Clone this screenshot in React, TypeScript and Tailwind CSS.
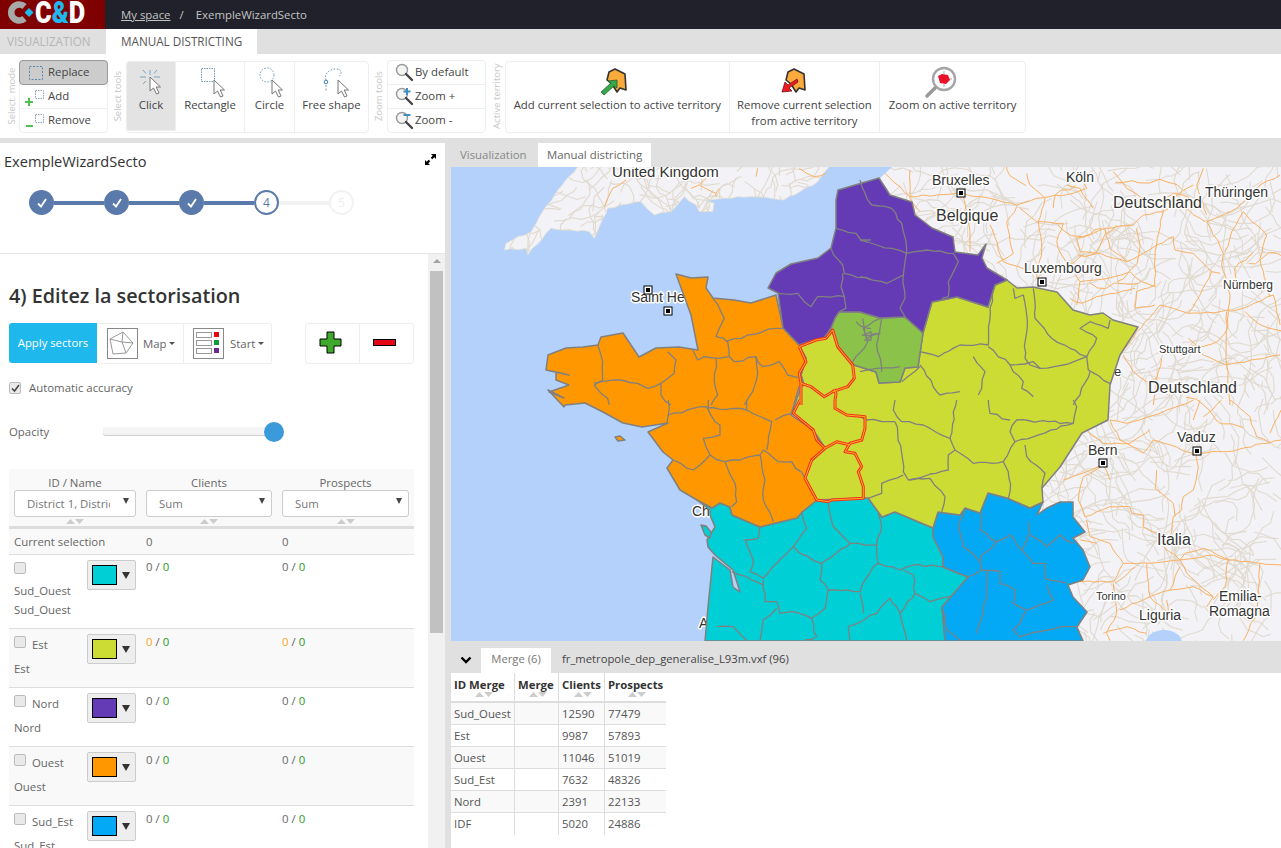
import React from "react";

const z = (ox: number, oy: number, s: string) =>
  s.trim().split(/\s+/).map((p) => {
    const [x, y] = p.split(",").map(Number);
    return `${(ox + x / 3).toFixed(1)},${(oy + y / 3).toFixed(1)}`;
  }).join(" ");

function mulberry(a: number) {
  return () => {
    a |= 0; a = (a + 0x6d2b79f5) | 0;
    let t = Math.imul(a ^ (a >>> 15), 1 | a);
    t = (t + Math.imul(t ^ (t >>> 7), 61 | t)) ^ t;
    return ((t ^ (t >>> 14)) >>> 0) / 4294967296;
  };
}
function wiggle(s: string, amp: number, seed: number) {
  const r = mulberry(seed);
  const pts = s.trim().split(/\s+/).map((p) => p.split(",").map(Number));
  const out: string[] = [];
  pts.forEach((p, i) => {
    out.push(`${p[0]},${p[1]}`);
    const q = pts[i + 1];
    if (!q) return;
    const d = Math.hypot(q[0] - p[0], q[1] - p[1]);
    const n = Math.floor(d / 6);
    for (let k = 1; k < n; k++) {
      const t = k / n;
      const x = p[0] + (q[0] - p[0]) * t + (r() - 0.5) * 2 * amp;
      const y = p[1] + (q[1] - p[1]) * t + (r() - 0.5) * 2 * amp;
      out.push(`${x.toFixed(1)},${y.toFixed(1)}`);
    }
  });
  return out.join(" ");
}

const NORD = "879,178 862,183 838,190 836,200 836,228 831,248 818,258 791,264 776,273 768,288 778,293 783,328 799,345 814,340 824,338 831,328 835,318 839,312 860,312 880,318 905,317 923,333 932,302 957,297 988,307 995,285 1007,280 987,268 982,258 986,244 978,255 955,252 953,237 932,228 915,215 912,202 890,195";
const OUEST = "676,274 691,278 708,277 706,288 713,298 734,300 751,303 776,295 783,328 799,345 806,358 801,375 804,385 799,387 791,415 813,430 825,448 812,460 805,478 817,500 802,512 797,518 780,522 760,527 732,515 730,507 720,503 712,508 697,500 680,490 667,468 673,460 663,452 648,432 668,423 642,427 623,423 603,412 585,403 565,405 564,407 548,390 564,398 549,392 569,385 556,380 556,372 569,375 546,370 548,355 566,348 583,347 598,345 601,337 623,333 639,357 656,348 679,347 698,350 691,315";
const EST = "995,285 1007,280 1017,288 1033,287 1057,292 1073,310 1090,315 1103,313 1113,320 1138,327 1120,355 1110,385 1108,420 1082,433 1060,467 1042,488 1043,502 1030,508 1007,498 988,493 980,513 965,508 960,515 938,512 933,528 895,512 882,517 868,498 863,498 817,500 805,478 812,460 825,448 813,430 792,413 801,387 804,385 801,375 806,358 799,345 814,340 824,338 831,328 838,348 854,365 876,372 879,383 900,382 905,368 918,367 923,333 932,302 957,297 988,307";
const IDF = "831,328 835,318 839,312 860,312 880,318 905,317 923,333 918,367 905,368 900,382 879,383 876,372 854,365 838,348";
const SE = "938,512 960,515 965,508 980,513 988,493 1007,498 1030,508 1043,502 1037,515 1047,508 1060,502 1073,502 1073,517 1085,532 1073,538 1083,550 1090,567 1083,580 1068,585 1073,597 1087,612 1077,627 1083,641 945,641 942,607 968,577 943,567 943,557 933,537 933,528";
const SO = "697,500 712,508 720,503 730,507 732,515 760,527 780,522 797,518 802,512 817,500 863,498 868,498 882,517 895,512 933,528 933,537 943,557 943,567 968,577 942,607 945,641 705,641 708,607 713,557 730,570 733,587 740,592 733,570 715,555 708,547 707,540 715,527 710,515 710,510";
const UK = wiggle(z(451, 165, "380,5 320,75 265,155 240,200 165,235 160,255 225,250 230,270 300,190 360,195 415,200 430,220 470,130 570,110 610,150 660,140 700,95 735,120 745,140 785,140 790,115 760,105 820,100 900,95 1000,105 1100,50 1135,5"), 1, 5);
const LAND = "892,167 1281,167 1281,641 1000,641 1000,400 880,178";

const ROADS_ORANGE: string[] = [
  ...[
    "150,15 150,100 180,140","290,85 150,95 75,25","310,95 330,200 330,260","310,85 470,120 530,100 640,85 680,70 660,20",
    "470,125 440,170 450,230 460,265 410,295","500,25 510,60 555,100 535,170 545,250 530,340","620,60 660,70 700,130","390,180 430,290 545,330",
    "480,130 530,170 610,175 590,230 605,270 660,350 745,340 810,320 845,350 885,365 885,280 890,240 910,130",
    "735,190 820,180 850,150 910,140 950,115 1035,170","735,190 750,250 800,290 850,265 890,240 940,215 945,255 1000,265 1055,320 1080,325",
    "650,220 700,205 735,190","650,220 660,260 720,265 800,290","1055,320 1020,390 985,445 900,420 880,445 830,500 780,570",
    "985,445 1080,440 1150,430 1240,390","885,420 825,430 830,380 885,360","1040,170 1090,265 1085,300 1110,390 1100,470",
    "1150,140 1115,200 1095,260","1150,140 1220,210 1200,280 1230,395","905,580 890,640 880,720","985,520 1030,570 1100,600 1260,570",
    "1100,440 1100,600 1110,720","760,20 800,70 890,130 1000,60","1240,390 1260,480","1030,10 1010,60 1040,150","1260,30 1200,60 1130,130 1040,170",
    "790,570 820,620 860,650 890,640","630,400 665,415 710,395 825,370","660,350 650,420",
  ].map((s) => z(860, 165, s)),
  ...[
    "750,60 800,70 900,40 1000,0","750,60 780,120 850,160 880,120 1000,160 1100,155 1263,120","680,90 730,130 810,130 870,90",
    "1005,150 1015,200 1000,270 970,290 965,330 940,350 930,410","890,210 885,265 940,310 945,350","730,195 670,230 655,300 675,350 750,320 810,320 815,340 850,345 850,380 895,400",
    "610,240 730,195 750,240","680,360 690,410 750,430 790,490 870,490 960,480 1060,465 1105,480 1200,490 1263,495","660,420 710,430","790,490 760,545 630,545",
    "760,550 770,640 740,700 750,722","860,490 870,590 925,640 920,600","960,480 910,440","960,480 975,460 1030,445 1110,480","960,480 980,520 1060,590 1040,620",
    "960,500 930,570 870,590 780,630","825,500 765,550","1105,480 1095,560 1060,600","1200,490 1190,640 1150,722","1020,0 1000,60","1085,0 1030,50",
    "1110,0 1170,50 1190,110 1230,130","730,700 800,680 860,700","1230,100 1263,30","1060,590 1000,560 930,570",
  ].map((s) => z(860, 400, s)),
  ...["525,45 485,70 470,100 460,125","765,40 745,60 720,70","745,60 795,85 805,70","1045,10 1090,35 1125,25","920,10 915,35","795,85 795,95"].map((s) => z(451, 165, s)),
].map((s, i) => wiggle(s, 0.9, 100 + i));

const BORDERS: string[] = [
  ...[
    "785,400 820,460 795,515 830,530 835,575 800,580 760,575 740,585 725,555","825,530 890,510 975,490 995,490","835,575 850,590 915,575 935,605 985,590 1010,630 1050,640",
    "795,580 790,650 800,690 780,720","915,575 920,625 905,680 880,720","440,540 455,590 455,645 430,660 470,700 475,720","430,655 510,645 560,655 590,670 630,655 670,625 675,585 650,560",
    "630,655 630,690 660,720","1155,190 1215,205 1230,225 1260,225","1140,250 1175,300 1180,325 1260,345","1175,325 1170,365 1180,395 1100,395 1080,425 1060,410 1040,385 980,385","1180,395 1185,430 1165,440",
    "1235,460 1240,490 1250,530 1230,560 1205,590","1215,470 1250,490 1260,490","1240,510 1260,500 1260,525 1240,525",
  ].map((s) => z(451, 165, s)),
  ...[
    "415,0 415,45 490,25 530,20 555,65 570,75 570,105 520,115 540,165 585,185 630,180 690,165 700,150 745,185 785,185 825,235","530,25 650,30 725,65 710,150","735,60 785,40","410,70 415,45",
    "585,185 615,250 620,305 605,320","690,165 705,240 700,300 725,350 730,365","540,165 510,195 490,210 430,180","535,0 535,25","650,0 650,30",
    "895,310 910,380 960,430 950,440 875,490 810,460 790,440 740,490 700,535 660,515 670,480 645,420 685,415 690,380","815,335 830,385 790,440","960,430 985,430 1040,435 1055,380 1045,340",
    "1040,435 1045,490 1110,510 1150,495 1240,500","875,490 870,540 895,570 990,575 1030,500 1045,490","1120,510 1150,525 1155,580 1110,640 1080,595 1040,640 955,680 960,720",
    "895,570 885,625 845,655 790,635 750,640 740,605 705,605 700,540","990,580 1000,640","1155,580 1200,605 1260,590","605,515 650,530 700,555","740,625 700,660 690,720","845,655 860,710 825,720","1110,640 1130,720","560,680 610,680 650,720",
  ].map((s) => z(530, 400, s)),
  ...[
    "0,45 35,120 95,130 125,175 140,260 130,330 135,400 120,430 135,455","0,225 50,240 95,250 140,265 200,255 280,265 295,290 265,350 265,395 245,400","0,335 80,355 130,330",
    "405,360 390,430 385,540 300,540 235,575 180,560","460,370 465,400 490,390 500,450 495,580 510,600 540,610 610,600 680,575","385,545 450,600 460,620 490,650 485,670 520,695",
    "520,370 525,460 575,520 630,550 680,575 710,520 660,490 690,470 745,490 750,465","680,575 685,615 750,655","450,600 520,590 540,610","340,575 375,620 365,670 355,690","690,620 660,690 640,720",
    "180,600 230,680 240,690 300,680","125,650 180,605","65,460 50,540 65,620","0,620 50,610 120,605","60,460 10,490 20,520 60,505 5,510",
  ].map((s) => z(860, 165, s)),
  ...[
    "105,65 125,160 130,215 145,240 210,235 255,290 245,335","125,65 190,75 270,115 285,150 265,165 265,210 150,240","285,150 340,190 430,185 445,215 450,275 445,295","430,185 465,125 450,95 470,60 640,70 650,20 640,0",
    "465,125 640,70","495,135 500,170 555,220 545,265","290,0 270,115","105,65 20,60 0,50","130,225 65,250 65,280 25,295","105,0 100,30 125,65","385,0 390,40 450,60",
    "315,325 295,380 310,440 360,485 365,510 420,515 420,550 465,570 460,610 500,630 580,600 560,555","365,340 360,390 410,425 450,405 485,450 520,490 555,490 555,535 620,550","505,365 510,405 560,440 600,405 640,430","505,405 485,450",
    "410,425 365,465 360,485","365,510 325,530","380,515 380,590 350,700","500,630 480,670 460,690 480,710 600,680 650,680","245,620 260,690 300,722",
  ].map((s) => z(860, 400, s)),
].map((s, i) => wiggle(s, 1.2, 300 + i));

const RED: string[] = [
  z(451, 165, "1045,545 1095,525 1125,520 1145,495 1160,545 1205,600 1210,640 1190,665 1145,680 1120,695 1080,665 1050,655 1045,625 1065,590 1045,545"),
  z(451, 165, "1050,655 1050,720"),
  z(530, 400, "810,0 790,40 850,90 860,120 885,145 845,180 825,235 860,300 895,305 905,300 1000,295 1000,260 985,215 995,200 975,160 945,155 960,130 995,120 1005,85 1005,50 950,45 915,25 915,0"),
  z(530, 400, "885,145 920,125 960,135"),
  "835,400 836,394 834,389",
];

function walks(seed: number, n: number, x0: number, y0: number, x1: number, y1: number, lo = 6, hi = 15) {
  const r = mulberry(seed);
  const out: string[] = [];
  for (let i = 0; i < n; i++) {
    let x = x0 + r() * (x1 - x0), y = y0 + r() * (y1 - y0), a = r() * 6.28;
    const pts = [`${x.toFixed(1)},${y.toFixed(1)}`];
    const k = 4 + Math.floor(r() * 5);
    for (let j = 0; j < k; j++) {
      a += (r() - 0.5) * 1.6;
      const l = lo + r() * (hi - lo);
      x += Math.cos(a) * l; y += Math.sin(a) * l;
      pts.push(`${x.toFixed(1)},${y.toFixed(1)}`);
    }
    out.push(pts.join(" "));
  }
  return out;
}
const BEIGE_MAIN = walks(7, 620, 880, 167, 1281, 641);
const BEIGE_UK = walks(11, 130, 505, 167, 830, 255, 5, 11);
const ORANGE_EXTRA = walks(23, 16, 1000, 170, 1281, 400, 6, 12);

const LABELS: [string, number, number, number][] = [
  ["Bruxelles", 932, 185, 14], ["Belgique", 936, 221, 16], ["Köln", 1066, 182, 14], ["Deutschland", 1113, 208, 16], ["Thüringen", 1205, 197, 14],
  ["Luxembourg", 1024, 273, 14], ["Nürnberg", 1223, 289, 12], ["Stuttgart", 1159, 353, 11], ["Deutschland", 1148, 393, 16], ["Vaduz", 1177, 442, 14],
  ["Bern", 1088, 455, 14], ["Italia", 1157, 545, 16], ["Torino", 1096, 600, 11], ["Liguria", 1139, 620, 14], ["Emilia-", 1219, 601, 14], ["Romagna", 1209, 616, 14],
  ["e", 1114, 376, 13], ["United Kingdom", 612, 177, 15], ["Saint Helier", 631, 302, 14], ["Cherbourg", 692, 516, 14], ["Arcachon", 699, 628, 14],
];
const PINS: [number, number][] = [[961, 193], [1042, 282], [1103, 463], [1197, 451], [668, 311], [648, 290]];

function MapView() {
  return (
    <svg viewBox="451 167 830 474" className="block w-[830px] h-[474px] shrink-0">
      <defs>
        <clipPath id="ukclip"><polygon points={UK} /></clipPath>
        <clipPath id="landclip"><polygon points={LAND} /></clipPath>
      </defs>
      <rect x="451" y="167" width="830" height="474" fill="#b3d1fa" />
      <polygon points={UK} fill="#f3f2f6" stroke="#e3ded6" strokeWidth="0.8" />
      <polygon points={LAND} fill="#f3f2f6" />
      <g fill="none" stroke="#e0dacf" strokeWidth="1.1" strokeLinejoin="round">
        <g clipPath="url(#ukclip)">{BEIGE_UK.map((p, i) => <polyline key={i} points={p} />)}</g>
        <g clipPath="url(#landclip)">{BEIGE_MAIN.map((p, i) => <polyline key={i} points={p} />)}</g>
      </g>
      <g fill="none" stroke="#fab163" strokeWidth="1" strokeLinejoin="round">
        {ROADS_ORANGE.map((p, i) => <polyline key={i} points={p} />)}
        <g clipPath="url(#landclip)">{ORANGE_EXTRA.map((p, i) => <polyline key={i} points={p} />)}</g>
      </g>
      <ellipse cx="1164" cy="643" rx="18" ry="13" fill="#b3d1fa" />
      <g fontFamily="'Liberation Sans', Arial, sans-serif" fill="#333" stroke="#fff" strokeWidth="3" strokeLinejoin="round" paintOrder="stroke">
        {LABELS.map(([t, x, y, s], i) => <text key={i} x={x} y={y} fontSize={s}>{t}</text>)}
      </g>
      {PINS.map(([x, y], i) => (
        <g key={i}>
          <rect x={x - 4} y={y - 4} width="8" height="8" fill="#fff" stroke="#000" strokeWidth="1" />
          <rect x={x - 2} y={y - 2} width="4" height="4" fill="#000" />
        </g>
      ))}
      <g stroke="#808080" strokeWidth="1.5" strokeLinejoin="round">
        <polygon points={SO} fill="#00cfd5" />
        <polygon points={SE} fill="#03a9f4" />
        <polygon points={EST} fill="#cddc35" />
        <polygon points={IDF} fill="#8bc34a" />
        <polygon points={OUEST} fill="#ff9800" />
        <polygon points={NORD} fill="#653ab5" />
        <polygon points="701,525 706,526 711,532 710,538 705,535" fill="#00cfd5" />
        <polygon points="615,437 620,436 625,440 618,441" fill="#ff9800" />
      </g>
      <g fill="none" stroke="#808080" strokeWidth="1.3" strokeLinejoin="round">
        {BORDERS.map((p, i) => <polyline key={i} points={p} />)}
      </g>
      <g fill="none" strokeLinejoin="round">
        {RED.map((p, i) => <polyline key={i} points={p} stroke="#f4311c" strokeWidth="3" />)}
        {RED.map((p, i) => <polyline key={i} points={p} stroke="#ffb020" strokeWidth="1" />)}
      </g>
    </svg>
  );
}

const Cursor = ({ x, y }: { x: number; y: number }) => (
  <path transform={`translate(${x} ${y})`} d="M0 0V14L3.5 11L6.5 17L9 16L6.2 10H10.5Z" fill="#fff" stroke="#777" strokeWidth="1" strokeLinejoin="round" />
);

const Mag = ({ plus, minus }: { plus?: boolean; minus?: boolean }) => (
  <svg width="20" height="20" viewBox="0 0 20 20" className="shrink-0">
    <circle cx="7" cy="7" r="5.5" fill="#f4f4f4" stroke="#999" strokeWidth="1.4" />
    <path d="M11 11L17 17" stroke="#444" strokeWidth="2.4" strokeLinecap="round" />
    {plus && <path d="M12 1V8M8.5 4.5H15.5" stroke="#3d8fc4" strokeWidth="2" />}
    {minus && <path d="M8.5 4H15.5" stroke="#3d8fc4" strokeWidth="2" />}
  </svg>
);

const VLabel = ({ t, cls }: { t: string; cls: string }) => (
  <div className={`${cls} shrink-0 flex items-center justify-center self-stretch`}>
    <span className="whitespace-nowrap -rotate-90 text-[9.5px] text-[#c8c8c8]">{t}</span>
  </div>
);

const ToolBtn = ({ w, active, label, children }: { w: string; active?: boolean; label: string; children: React.ReactNode }) => (
  <div className={`${w} h-full flex flex-col items-center border-r border-[#eeeeee] last:border-r-0 ${active ? "bg-[#e3e3e3] border border-[#b5b5b5] rounded-l-sm -ml-[1px] -my-[1px] h-[72px]" : ""}`}>
    <svg width="44" height="32" viewBox="0 0 44 32" className="mt-[5px] shrink-0">{children}</svg>
    <span className="-mt-[2px] text-[11.4px] leading-[16px] text-[#444] whitespace-nowrap">{label}</span>
  </div>
);

const ATBtn = ({ w, dx, lines, children }: { w: string; dx: string; lines: string[]; children: React.ReactNode }) => (
  <div className={`${w} h-full flex flex-col items-center border-r border-[#eeeeee] last:border-r-0`}>
    <svg width="40" height="30" viewBox="0 0 40 30" className={`mt-[6px] shrink-0 overflow-visible ${dx}`}>{children}</svg>
    <div className="-mt-[1px] text-[11.35px] leading-[15.5px] text-[#444] text-center whitespace-nowrap">
      {lines.map((l) => <div key={l}>{l}</div>)}
    </div>
  </div>
);

const Terr = () => <path d="M14 4L20 1L30 6L31 22L25 20L22 24L17 16L12 12Z" fill="#fbab3c" stroke="#333" strokeWidth="1.6" strokeLinejoin="round" />;

function Toolbar() {
  return (
    <div className="h-[84px] bg-white flex items-stretch text-[#444] pt-[6px] pb-[5px]">
      <VLabel t="Select. mode" cls="w-[19px] pl-[5px]" />
      <div className="w-[89px] shrink-0 border border-[#eeeeee] rounded-sm flex flex-col">
        <div className="h-[25px] -mx-[1px] -mt-[1px] bg-[#cccccc] border border-[#999] rounded-sm flex items-center text-[11.4px] shrink-0">
          <svg width="28" height="24" viewBox="0 0 28 24" className="shrink-0"><rect x="9.5" y="5.5" width="13" height="13" fill="none" stroke="#5a86ad" strokeDasharray="2 1.5" /></svg>
          <span className="-mt-[2px]">Replace</span>
        </div>
        <div className="h-[24px] border-b border-[#eeeeee] flex items-center text-[11.4px]">
          <svg width="28" height="24" viewBox="0 0 28 24" className="shrink-0"><rect x="15.5" y="5.5" width="8" height="8" fill="none" stroke="#8aa5bd" strokeDasharray="1.5 1" /><path d="M9 13V21M5 17H13" stroke="#4fbf4f" strokeWidth="2" /></svg>
          <span className="-mt-[2px]">Add</span>
        </div>
        <div className="h-[23px] flex items-center text-[11.4px]">
          <svg width="28" height="24" viewBox="0 0 28 24" className="shrink-0"><rect x="15.5" y="5.5" width="8" height="8" fill="none" stroke="#8aa5bd" strokeDasharray="1.5 1" /><path d="M6 17H13" stroke="#4fbf4f" strokeWidth="2" /></svg>
          <span className="-mt-[2px]">Remove</span>
        </div>
      </div>
      <VLabel t="Select tools" cls="w-[18px] pl-[2px]" />
      <div className="w-[243px] h-[72px] shrink-0 border border-[#eeeeee] rounded-sm flex mt-[1px]">
        <ToolBtn w="w-[50px]" active label="Click">
          <g stroke="#7da2bf" strokeWidth="1"><path d="M21 3V8M11 10H17M25 10H31M14 3L17 6.5M28 3L25 6.5M14 17L17 14M28 17L25 14" /></g>
          <Cursor x={21} y={10} />
        </ToolBtn>
        <ToolBtn w="w-[69px]" label="Rectangle">
          <rect x="13.5" y="1.5" width="13" height="13" fill="none" stroke="#6f98b9" strokeDasharray="1.5 1" />
          <Cursor x={26} y={13} />
        </ToolBtn>
        <ToolBtn w="w-[50px]" label="Circle">
          <circle cx="19" cy="8" r="7" fill="none" stroke="#6f98b9" strokeDasharray="1.5 1.5" />
          <Cursor x={24} y={13} />
        </ToolBtn>
        <ToolBtn w="w-[73px]" label="Free shape">
          <path d="M16 13C14 6 20 2 26 2C33 2 32 8 28 10" fill="none" stroke="#6f98b9" strokeDasharray="1.5 1.5" />
          <circle cx="16" cy="15" r="1.8" fill="none" stroke="#3d7fae" />
          <path d="M16 18V24" stroke="#6f98b9" strokeDasharray="2 1.5" />
          <Cursor x={28} y={13} />
        </ToolBtn>
      </div>
      <VLabel t="Zoom tools" cls="w-[18px] pl-[2px]" />
      <div className="w-[99px] shrink-0 border border-[#eeeeee] rounded-sm flex flex-col text-[11.4px]">
        <div className="h-[24px] border-b border-[#eeeeee] flex items-center pl-[7px]"><Mag /><span className="-mt-[2px]">By default</span></div>
        <div className="h-[24px] border-b border-[#eeeeee] flex items-center pl-[7px]"><Mag plus /><span className="-mt-[2px]">Zoom +</span></div>
        <div className="h-[23px] flex items-center pl-[7px]"><Mag minus /><span className="-mt-[2px]">Zoom -</span></div>
      </div>
      <VLabel t="Active territory" cls="w-[19px] pl-[3px]" />
      <div className="w-[521px] h-[72px] shrink-0 border border-[#eeeeee] rounded-sm flex mt-[1px]">
        <ATBtn w="w-[224px]" dx="-translate-x-[2px]" lines={["Add current selection to active territory"]}>
          <Terr />
          <path d="M6 24L9 27L19 18L22 20L22 12L13 13L16 15Z" fill="#36a94a" stroke="#2a5a30" strokeWidth="0.8" />
        </ATBtn>
        <ATBtn w="w-[151px]" dx="-translate-x-[10px]" lines={["Remove current selection", "from active territory"]}>
          <Terr />
          <path d="M24 14L23 11L14 17L11 14L8 24L18 23L15 20Z" fill="#ea1c24" stroke="#7a1010" strokeWidth="0.8" />
        </ATBtn>
        <ATBtn w="w-[145px]" dx="-translate-x-[14px]" lines={["Zoom on active territory"]}>
          <circle cx="25" cy="11" r="11" fill="#fff" stroke="#a5a5a5" strokeWidth="2.4" />
          <path d="M25 3V6M25 16V19M33 11H30" stroke="#aaa" strokeWidth="1" />
          <path d="M19 8L23 6L29 7L31 12L27 16L21 15Z" fill="#e8112a" />
          <path d="M16 20L8 28" stroke="#999" strokeWidth="3.5" strokeLinecap="round" />
        </ATBtn>
      </div>
    </div>
  );
}

const Step = ({ n, state }: { n: number; state: "done" | "cur" | "next" }) => (
  <div className={`w-[25px] h-[25px] rounded-full shrink-0 flex items-center justify-center text-[12px] ${state === "done" ? "bg-[#5a7aab] text-white" : state === "cur" ? "bg-white border-2 border-[#5a7aab] text-[#5a7aab]" : "bg-white border-2 border-[#f2f2f2] text-[#eeeeee]"}`}>
    {state === "done" ? (
      <svg width="12" height="12" viewBox="0 0 12 12"><path d="M2 6.5L5 9.5L10 2" fill="none" stroke="#fff" strokeWidth="1.8" /></svg>
    ) : n}
  </div>
);
const StepLine = ({ on }: { on: boolean }) => <div className={`w-[50px] h-[4px] shrink-0 ${on ? "bg-[#5a7aab]" : "bg-[#f2f2f2]"}`} />;

const Sort = () => (
  <svg width="18" height="5" viewBox="0 0 18 5" className="block mx-auto"><path d="M0 5L4.5 0L9 5ZM9 0H18L13.5 5Z" fill="#cccccc" /></svg>
);

const Sel = ({ text, w }: { text: string; w: string }) => (
  <div className={`${w} h-[27px] border border-[#cccccc] rounded-[3px] bg-white relative flex items-center pl-[12px] text-[11.4px] text-[#777] overflow-hidden`}>
    <span className="whitespace-nowrap overflow-hidden w-[83px]">{text}</span>
    <span className="absolute right-[6px] top-[7px] w-0 h-0 border-l-[3px] border-r-[3px] border-t-[6px] border-l-transparent border-r-transparent border-t-[#444]" />
  </div>
);

const Check = ({ on }: { on?: boolean }) => (
  <span className="w-[12px] h-[12px] shrink-0 rounded-[2px] bg-[#e9e9e9] border border-[#bbbbbb] flex items-center justify-center">
    {on && <svg width="9" height="9" viewBox="0 0 9 9"><path d="M1 4.5L3.5 7L8 1" fill="none" stroke="#444" strokeWidth="1.5" /></svg>}
  </span>
);

const Val = ({ warn }: { warn?: boolean }) => (
  <span className="text-[11.4px] text-[#666]"><span className={warn ? "text-[#f5a623]" : ""}>0</span> / <span className="text-[#2c9a1e]">0</span></span>
);

const Row = ({ name, color, alt, wrap, warn, h }: { name: string; color: string; alt?: boolean; wrap?: boolean; warn?: boolean; h: string }) => (
  <div className={`grid grid-cols-[132px_136px_137px] ${h} border-b border-[#dddddd] text-[11.4px] text-[#666] shrink-0 ${alt ? "bg-[#f9f9f9]" : "bg-white"}`}>
    <div className="flex pl-[5px] pt-[5px]">
      <div className="w-[73px] shrink-0 -mt-[5px]">
        {wrap ? (
          <>
            <div className="pt-[7px] h-[26px]"><Check /></div>
            <div className="leading-[19px]">{name}</div>
            <div className="leading-[19px]">{name}</div>
          </>
        ) : (
          <>
            <div className="flex items-start gap-[6px] h-[26px] pt-[7px]">
              <Check />
              <span className="leading-[19px] -mt-[1px]">{name}</span>
            </div>
            <div className="leading-[19px] mt-[4px]">{name}</div>
          </>
        )}
      </div>
      <div className="w-[49px] h-[30px] bg-[#eeeeee] border border-[#cccccc] rounded-[2px] flex items-center pl-[4px] gap-[5px] shrink-0">
        <span className="w-[25px] h-[20px] border border-black shrink-0" style={{ backgroundColor: color }} />
        <span className="w-0 h-0 border-l-[4px] border-r-[4px] border-t-[7px] border-l-transparent border-r-transparent border-t-[#333]" />
      </div>
    </div>
    <div className={`pl-[5px] ${wrap ? "pt-[4px]" : "pt-[5px]"} leading-[16px]`}><Val warn={warn} /></div>
    <div className={`pl-[5px] ${wrap ? "pt-[4px]" : "pt-[5px]"} leading-[16px]`}><Val warn={warn} /></div>
  </div>
);

function LeftPanel() {
  return (
    <div className="w-[445px] shrink-0 bg-white flex flex-col overflow-hidden">
      <div className="h-[111px] shrink-0 border-b border-[#e5e5e5] px-[4px] pt-[8px]">
        <div className="flex items-center justify-between pr-[4px]">
          <span className="text-[14.6px] leading-[20px] font-medium text-[#333]">ExempleWizardSecto</span>
          <svg width="13" height="13" viewBox="0 0 13 13" className="-translate-y-[2px]"><path d="M7 1H12V6L10.3 4.3L8.3 6.3L6.7 4.7L8.7 2.7ZM1 7L2.7 8.7L4.7 6.7L6.3 8.3L4.3 10.3L6 12H1Z" fill="#000" /></svg>
        </div>
        <div className="flex items-center pl-[25px] mt-[19px]">
          <Step n={1} state="done" /><StepLine on /><Step n={2} state="done" /><StepLine on /><Step n={3} state="done" /><StepLine on /><Step n={4} state="cur" /><StepLine on={false} /><Step n={5} state="next" />
        </div>
      </div>
      <div className="flex-1 flex overflow-hidden min-h-0">
        <div className="w-[428px] shrink-0 pl-[9px] overflow-hidden">
          <div className="w-[405px]">
            <h2 className="mt-[27px] text-[19.8px] leading-[30px] font-semibold text-[#333]">4) Editez la sectorisation</h2>
            <div className="flex mt-[12px] items-start">
              <div className="w-[88px] h-[40px] bg-[#1fb8ec] rounded-l-[3px] text-white text-[11.3px] flex items-center justify-center">Apply sectors</div>
              <div className="w-[87px] h-[41px] border border-l-0 border-[#eeeeee] flex items-center pl-[10px] gap-[5px] text-[11.4px] text-[#666]">
                <svg width="31" height="31" viewBox="0 0 31 31" className="shrink-0"><rect x="0.5" y="0.5" width="30" height="30" fill="#fff" stroke="#888" /><path d="M3 11L16 4L26 15L19 25L6 26ZM3 11L15 14L19 25M16 4L15 14L26 15" fill="none" stroke="#999" /></svg>
                <span>Map</span>
                <span className="-ml-[3px] w-0 h-0 border-l-[3px] border-r-[3px] border-t-[3px] border-l-transparent border-r-transparent border-t-[#555]" />
              </div>
              <div className="w-[88px] h-[41px] border border-l-0 border-[#eeeeee] rounded-r-[3px] flex items-center pl-[9px] gap-[6px] text-[11.4px] text-[#666]">
                <svg width="31" height="31" viewBox="0 0 31 31" className="shrink-0"><rect x="0.5" y="0.5" width="30" height="30" fill="#fff" stroke="#888" /><g fill="none" stroke="#999"><rect x="3.5" y="4.5" width="15" height="5" /><rect x="3.5" y="12.5" width="15" height="5" /><rect x="3.5" y="20.5" width="15" height="5" /></g><rect x="21" y="4" width="5" height="5" fill="#e30613" /><rect x="21" y="12" width="5" height="5" fill="#0f9a3c" /><rect x="21" y="20" width="5" height="5" fill="#6c2a8c" /></svg>
                <span>Start</span>
                <span className="-ml-[3px] w-0 h-0 border-l-[3px] border-r-[3px] border-t-[3px] border-l-transparent border-r-transparent border-t-[#555]" />
              </div>
              <div className="ml-[33px] w-[109px] h-[41px] border border-[#eeeeee] rounded-[3px] flex">
                <div className="w-[54px] border-r border-[#eeeeee] flex items-center justify-center">
                  <svg width="23" height="23" viewBox="0 0 23 23" className="-translate-x-[2px] -translate-y-[1px]"><path d="M8 1H15V8H22V15H15V22H8V15H1V8H8Z" fill="#3fa92e" stroke="#000" /></svg>
                </div>
                <div className="flex-1 flex items-center justify-center">
                  <svg width="23" height="7" viewBox="0 0 23 7" className="-translate-x-[2px] -translate-y-[1px]"><rect x="0.5" y="0.5" width="22" height="6" fill="#e30613" stroke="#000" /></svg>
                </div>
              </div>
            </div>
            <div className="flex items-center gap-[8px] mt-[17px] h-[14px] text-[11.4px] text-[#666]"><Check on /><span>Automatic accuracy</span></div>
            <div className="flex items-center h-[24px] mt-[24px]">
              <span className="w-[94px] text-[11.4px] text-[#666] mt-[1px]">Opacity</span>
              <div className="relative w-[168px] h-[9px] bg-[#f5f5f5] rounded-[3px] shadow-[inset_0_-1px_1px_#ccc]">
                <span className="absolute -right-[13px] -top-[5px] w-[20px] h-[20px] rounded-full bg-[#3b9ad9]" />
              </div>
            </div>
            <div className="mt-[26px] bg-[#f9f9f9] h-[60px] flex flex-col border-b-[3px] border-[#dddddd]">
              <div className="grid grid-cols-[132px_136px_137px]">
                {[["ID / Name", "District 1, District 2", "w-[122px]"], ["Clients", "Sum", "w-[126px]"], ["Prospects", "Sum", "w-[127px]"]].map(([t, s, w]) => (
                  <div key={t} className="pl-[5px]">
                    <div className={`${w} text-center text-[11.4px] leading-[13px] pt-[7px] pb-[1px] text-[#666]`}>{t}</div>
                    <Sel text={s} w={w} />
                    <div className={`${w} pt-[2px]`}><Sort /></div>
                  </div>
                ))}
              </div>
            </div>
            <div className="grid grid-cols-[132px_136px_137px] h-[26px] items-center border-b border-[#dddddd] bg-[#f9f9f9] text-[11.4px] text-[#666]">
              <div className="pl-[5px]">Current selection</div><div className="pl-[5px]">0</div><div className="pl-[5px]">0</div>
            </div>
            <Row name="Sud_Ouest" color="#00cfd5" wrap h="h-[74px]" />
            <Row name="Est" color="#cddc35" alt warn h="h-[59px]" />
            <Row name="Nord" color="#653ab5" h="h-[59px]" />
            <Row name="Ouest" color="#ff9800" alt h="h-[59px]" />
            <Row name="Sud_Est" color="#03a9f4" h="h-[59px]" />
          </div>
        </div>
        <div className="w-[17px] shrink-0 bg-[#f1f1f1] flex flex-col items-center">
          <span className="mt-[5px] w-0 h-0 border-l-[4px] border-r-[4px] border-b-[4px] border-l-transparent border-r-transparent border-b-[#a3a3a3]" />
          <div className="w-[13px] h-[362px] mt-[8px] bg-[#c1c1c1]" />
        </div>
      </div>
    </div>
  );
}

const MERGE: [string, string, string][] = [
  ["Sud_Ouest", "12590", "77479"], ["Est", "9987", "57893"], ["Ouest", "11046", "51019"], ["Sud_Est", "7632", "48326"], ["Nord", "2391", "22133"], ["IDF", "5020", "24886"],
];

function MergeTable() {
  const cols = "grid grid-cols-[64px_44px_46px_61px] w-[215px]";
  return (
    <div className="flex-1 bg-white text-[11.35px] text-[#555]">
      <div className={`${cols} h-[30px] border-b-[2px] border-[#dddddd]`}>
        {["ID Merge", "Merge", "Clients", "Prospects"].map((h) => (
          <div key={h} className="border-r border-[#dddddd] last:border-r-0 pl-[3px] pt-[4px] font-bold text-[#333] whitespace-nowrap overflow-hidden">
            <div className="leading-[15px]">{h}</div>
            <Sort />
          </div>
        ))}
      </div>
      {MERGE.map(([a, b, c], i) => (
        <div key={a} className={`${cols} h-[22px] ${i < 5 ? "border-b border-[#dddddd]" : ""} ${i % 2 === 0 ? "bg-[#f9f9f9]" : "bg-white"}`}>
          <div className="border-r border-[#dddddd] pl-[3px] leading-[21px]">{a}</div>
          <div className="border-r border-[#dddddd]" />
          <div className="border-r border-[#dddddd] pl-[3px] leading-[21px]">{b}</div>
          <div className="pl-[3px] leading-[21px]">{c}</div>
        </div>
      ))}
    </div>
  );
}

export default function App() {
  return (
    <div className="w-[1281px] h-[848px] overflow-hidden flex flex-col bg-[#e0e0e0] font-['Open_Sans',sans-serif]">
      <div className="h-[29px] shrink-0 bg-[#20212b] flex items-center">
        <div className="w-[105px] h-full bg-[#7f0000] flex items-start shrink-0 pl-[6px]">
          <svg width="29" height="25" viewBox="0 0 29 25" className="shrink-0">
            <path d="M18.5 6.5A8 8 0 1 0 18.5 18.5" fill="none" stroke="#a8a8a8" strokeWidth="6.5" />
            <path d="M23 8L27.5 12.5L23 17L18.5 12.5Z" fill="#1fb8ec" />
          </svg>
          <span className="text-[31px] leading-[25px] font-black text-white font-['Roboto',sans-serif] whitespace-nowrap scale-x-[0.82] origin-left">C<span className="text-[#1fb8ec]">&amp;</span>D</span>
        </div>
        <span className="ml-[16px] text-[11.4px] text-[#c4c4c4] underline">My space</span>
        <span className="ml-[9px] text-[11.4px] text-[#c4c4c4]">/</span>
        <span className="ml-[12px] text-[11.4px] text-[#c4c4c4]">ExempleWizardSecto</span>
      </div>
      <div className="h-[25px] shrink-0 flex bg-[#e0e0e0] text-[11.7px]">
        <div className="w-[106px] pl-[7px] leading-[25px] text-[#b5b5b5]">VISUALIZATION</div>
        <div className="w-[151px] bg-white pl-[15px] leading-[25px] text-[#555]">MANUAL DISTRICTING</div>
      </div>
      <Toolbar />
      <div className="h-[5px] shrink-0" />
      <div className="flex-1 flex min-h-0 gap-[6px]">
        <LeftPanel />
        <div className="w-[830px] shrink-0 flex flex-col min-h-0">
          <div className="h-[24px] shrink-0 flex text-[11.4px]">
            <div className="w-[87px] pl-[9px] leading-[24px] text-[#888]">Visualization</div>
            <div className="w-[113px] bg-white pl-[9px] leading-[24px] text-[#666]">Manual districting</div>
          </div>
          <MapView />
          <div className="h-[32px] shrink-0 bg-[#e0e0e0] flex items-end text-[11.25px]">
            <div className="w-[30px] h-full flex items-center justify-center pt-[5px]">
              <svg width="12" height="8" viewBox="0 0 12 8"><path d="M1.5 1.5L6 6L10.5 1.5" fill="none" stroke="#000" strokeWidth="2.4" /></svg>
            </div>
            <div className="w-[70px] h-[25px] bg-white text-center leading-[22px] text-[#777]">Merge (6)</div>
            <div className="ml-[11px] h-[25px] leading-[22px] text-[#444]">fr_metropole_dep_generalise_L93m.vxf (96)</div>
          </div>
          <MergeTable />
        </div>
      </div>
    </div>
  );
}
